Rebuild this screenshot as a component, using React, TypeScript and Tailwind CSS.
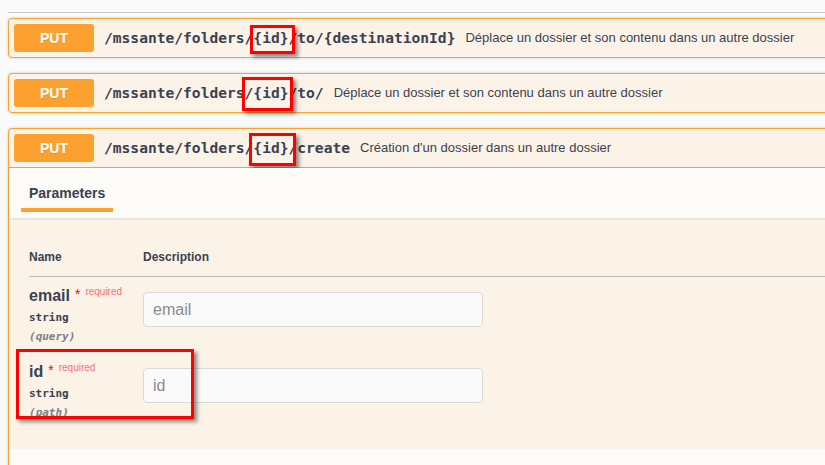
import React from "react";

const mono = "font-['DejaVu_Sans_Mono',monospace]";

function Summary({ path, desc, open }: { path: string; desc: string; open?: boolean }) {
  return (
    <div
      className={
        "flex items-center p-[5px] " + (open ? "border-b border-[#fca130]" : "")
      }
    >
      <span className="flex w-[80px] h-[28px] shrink-0 items-center justify-center rounded-[3px] bg-[#fca130] text-[14px] font-bold text-white [text-shadow:0_1px_0_rgba(0,0,0,0.1)]">
        PUT
      </span>
      <span className={mono + " px-[10px] text-[14.6px] font-bold text-[#3b4151] whitespace-nowrap"}>
        {path}
      </span>
      <span className="text-[13px] text-[#3b4151] whitespace-nowrap">{desc}</span>
    </div>
  );
}

function ParamRow({ name, type, where }: { name: string; type: string; where: string }) {
  return (
    <div className="flex h-[76px]">
      <div className="flex w-[114px] shrink-0 flex-col pt-[9px]">
        <div className="flex h-[20px] items-start leading-[20px]">
          <span className="text-[16px] font-bold text-[#3b4151]">{name}</span>
          <span className="ml-[5px] text-[14px] leading-[16px] text-[#ff0000]">*</span>
          <span className="ml-[5px] text-[10px] leading-[12px] text-[#ff6e6e]">required</span>
        </div>
        <div className={mono + " mt-[5px] text-[11px] font-bold leading-[14px] text-[#3b4151]"}>{type}</div>
        <div className={mono + " mt-[5px] text-[11px] font-bold italic leading-[14px] text-[#808080]"}>
          ({where})
        </div>
      </div>
      <div className="pt-[15px]">
        <div className="flex h-[35px] w-[340px] items-center rounded-[4px] border border-[#d9d9d9] bg-[#fafafa] px-[9px] text-[16px] text-[#8a8a8a]">
          {name}
        </div>
      </div>
    </div>
  );
}

export default function App() {
  return (
    <div className="relative h-[465px] w-[825px] overflow-hidden bg-[#fafafa] font-['Liberation_Sans',Arial,sans-serif]">
      <div className="w-[880px] pl-[8px] pt-[12px]">
        <div className="border-t border-[#c8c9cc]" />

        <div className="mt-[5px] flex flex-col gap-[15px]">
          <div className="rounded-[4px] border border-[#fca130] bg-[#fbf3e8] shadow-[0_0_3px_rgba(0,0,0,0.19)]">
            <Summary
              path="/mssante/folders/{id}/to/{destinationId}"
              desc="Déplace un dossier et son contenu dans un autre dossier"
            />
          </div>

          <div className="rounded-[4px] border border-[#fca130] bg-[#fbf3e8] shadow-[0_0_3px_rgba(0,0,0,0.19)]">
            <Summary
              path="/mssante/folders/{id}/to/"
              desc="Déplace un dossier et son contenu dans un autre dossier"
            />
          </div>

          <div className="rounded-[4px] border border-[#fca130] bg-[#fbf3e8] shadow-[0_0_3px_rgba(0,0,0,0.19)]">
            <Summary path="/mssante/folders/{id}/create" desc="Création d'un dossier dans un autre dossier" open />

            {/* section header */}
            <div className="relative z-10 flex h-[50px] items-center bg-[#fdfbf8] px-[20px] shadow-[0_1px_2px_rgba(0,0,0,0.1)]">
              <div className="relative text-[14px] font-bold text-[#3b4151]">
                Parameters
                <span className="absolute left-[-8px] right-[-8px] top-[25px] h-[4px] bg-[#fca130]" />
              </div>
            </div>

            {/* parameters table */}
            <div className="p-[20px]">
              <div className="flex border-b border-[#bdbbbd] py-[12px] text-[12px] font-bold leading-[14px] text-[#3b4151]">
                <div className="w-[114px]">Name</div>
                <div>Description</div>
              </div>
              <ParamRow name="email" type="string" where="query" />
              <ParamRow name="id" type="string" where="path" />
            </div>

            <div className="h-[40px] bg-[#fdfbf8]" />
          </div>
        </div>
      </div>

      {/* red annotation boxes */}
      <div className="absolute left-[250px] top-[25px] h-[29px] w-[45px] border-[3px] border-[#ff0000] shadow-[3px_3px_4px_rgba(0,0,0,0.45)]" />
      <div className="absolute left-[242px] top-[77px] h-[34px] w-[51px] border-[3px] border-[#ff0000] shadow-[3px_3px_4px_rgba(0,0,0,0.45)]" />
      <div className="absolute left-[249px] top-[133px] h-[33px] w-[47px] border-[3px] border-[#ff0000] shadow-[3px_3px_4px_rgba(0,0,0,0.45)]" />
      <div className="absolute left-[16px] top-[349px] h-[70px] w-[178px] border-[3px] border-[#ff0000] shadow-[3px_3px_4px_rgba(0,0,0,0.45)]" />
    </div>
  );
}
